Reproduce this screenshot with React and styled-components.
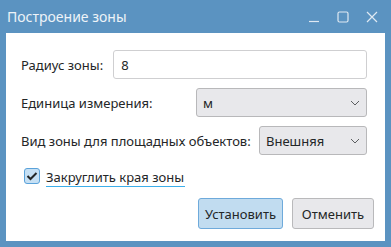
import React from 'react'
import styled, { createGlobalStyle } from 'styled-components';

const GlobalStyle = createGlobalStyle`
    html, body {
        margin: 0;
        padding: 0;
        background: #5b93c1;
    }
    * {
        box-sizing: border-box;
    }
`;

const Window = styled.div`
    width: 391px;
    height: 247px;
    background: #5b93c1;
    display: flex;
    flex-direction: column;
    padding: 0 6px 6px;
    font-family: "Noto Sans", "Open Sans", sans-serif;
    color: #232627;
`;

const TitleBar = styled.div`
    height: 33px;
    display: flex;
    align-items: center;
    padding: 0 0 1px 1px;
`;

const Title = styled.div`
    flex: 1;
    font-size: 14px;
    color: #eef3f8;
`;

const Controls = styled.div`
    display: flex;
    align-items: center;
    gap: 17px;
    margin-right: 7px;
    margin-top: 2px;
`;

const Content = styled.div`
    flex: 1;
    background: #ffffff;
    display: flex;
    flex-direction: column;
    padding: 17px 18px 12px 15px;
    font-size: 13px;
`;

const Row = styled.div`
    display: flex;
    align-items: center;
    height: 29px;
    margin-bottom: 9px;
`;

const Label = styled.div`
    white-space: nowrap;
    margin-right: ${p => p.gap || 10}px;
`;

const TextInput = styled.div`
    flex: 1;
    height: 29px;
    border: 1px solid #cfcfd1;
    border-radius: 3px;
    padding-left: 7px;
    display: flex;
    align-items: center;
`;

const Select = styled.div`
    width: ${p => p.width}px;
    margin-left: auto;
    height: 29px;
    background: #e8e8eb;
    border: 1px solid #b8b8ba;
    border-radius: 3px;
    padding: 0 6px 0 6px;
    display: flex;
    align-items: center;
    justify-content: space-between;
`;

const CheckRow = styled.div`
    display: flex;
    align-items: center;
    margin: 2px 0 0 3px;
    height: 20px;
`;

const Box = styled.div`
    width: 16px;
    height: 16px;
    border: 1px solid #5aa2da;
    background: #c6e0f4;
    border-radius: 3px;
    display: flex;
    align-items: center;
    justify-content: center;
    margin-right: 6px;
`;

const CheckLabel = styled.div`
    border-bottom: 1px solid #3daee9;
    line-height: 18px;
    padding-right: 1px;
    margin-top: 3px;
`;

const Buttons = styled.div`
    margin-top: auto;
    display: flex;
    justify-content: flex-end;
    gap: 9px;
    margin-right: -7px;
`;

const Button = styled.div`
    width: ${p => p.width}px;
    height: 31px;
    border-radius: 3px;
    border: 1px solid ${p => p.primary ? '#6eaadb' : '#b9b9bb'};
    background: ${p => p.primary ? '#c1dcf0' : '#e8e8eb'};
    display: flex;
    align-items: center;
    justify-content: center;
`;

const Chevron = () => (
    <svg width="10" height="6" viewBox="0 0 10 6">
        <path d="M1 1 L5 5 L9 1" fill="none" stroke="#5c5f61" strokeWidth="1" />
    </svg>
);

const App = () => (
    <>
        <GlobalStyle />
        <Window>
            <TitleBar>
                <Title>Построение зоны</Title>
                <Controls>
                    <svg width="12" height="12" viewBox="0 0 12 12">
                        <path d="M1 10.5 H11" stroke="#dfe9f3" strokeWidth="1.2" />
                    </svg>
                    <svg width="12" height="12" viewBox="0 0 12 12">
                        <rect x="1" y="1" width="10" height="10" rx="1.5" fill="none" stroke="#dfe9f3" strokeWidth="1.2" />
                    </svg>
                    <svg width="12" height="12" viewBox="0 0 12 12">
                        <path d="M1 1 L11 11 M11 1 L1 11" stroke="#dfe9f3" strokeWidth="1.2" />
                    </svg>
                </Controls>
            </TitleBar>
            <Content>
                <Row>
                    <Label>Радиус зоны:</Label>
                    <TextInput>8</TextInput>
                </Row>
                <Row>
                    <Label>Единица измерения:</Label>
                    <Select width={171}>
                        <span>м</span>
                        <Chevron />
                    </Select>
                </Row>
                <Row>
                    <Label gap={8}>Вид зоны для площадных объектов:</Label>
                    <Select width={108}>
                        <span>Внешняя</span>
                        <Chevron />
                    </Select>
                </Row>
                <CheckRow>
                    <Box>
                        <svg width="12" height="10" viewBox="0 0 12 10">
                            <path d="M1.5 5 L4.5 8 L10.5 2" fill="none" stroke="#232627" strokeWidth="2" />
                        </svg>
                    </Box>
                    <CheckLabel>Закруглить края зоны</CheckLabel>
                </CheckRow>
                <Buttons>
                    <Button primary width={85}>Установить</Button>
                    <Button width={82}>Отменить</Button>
                </Buttons>
            </Content>
        </Window>
    </>
);

export default App
